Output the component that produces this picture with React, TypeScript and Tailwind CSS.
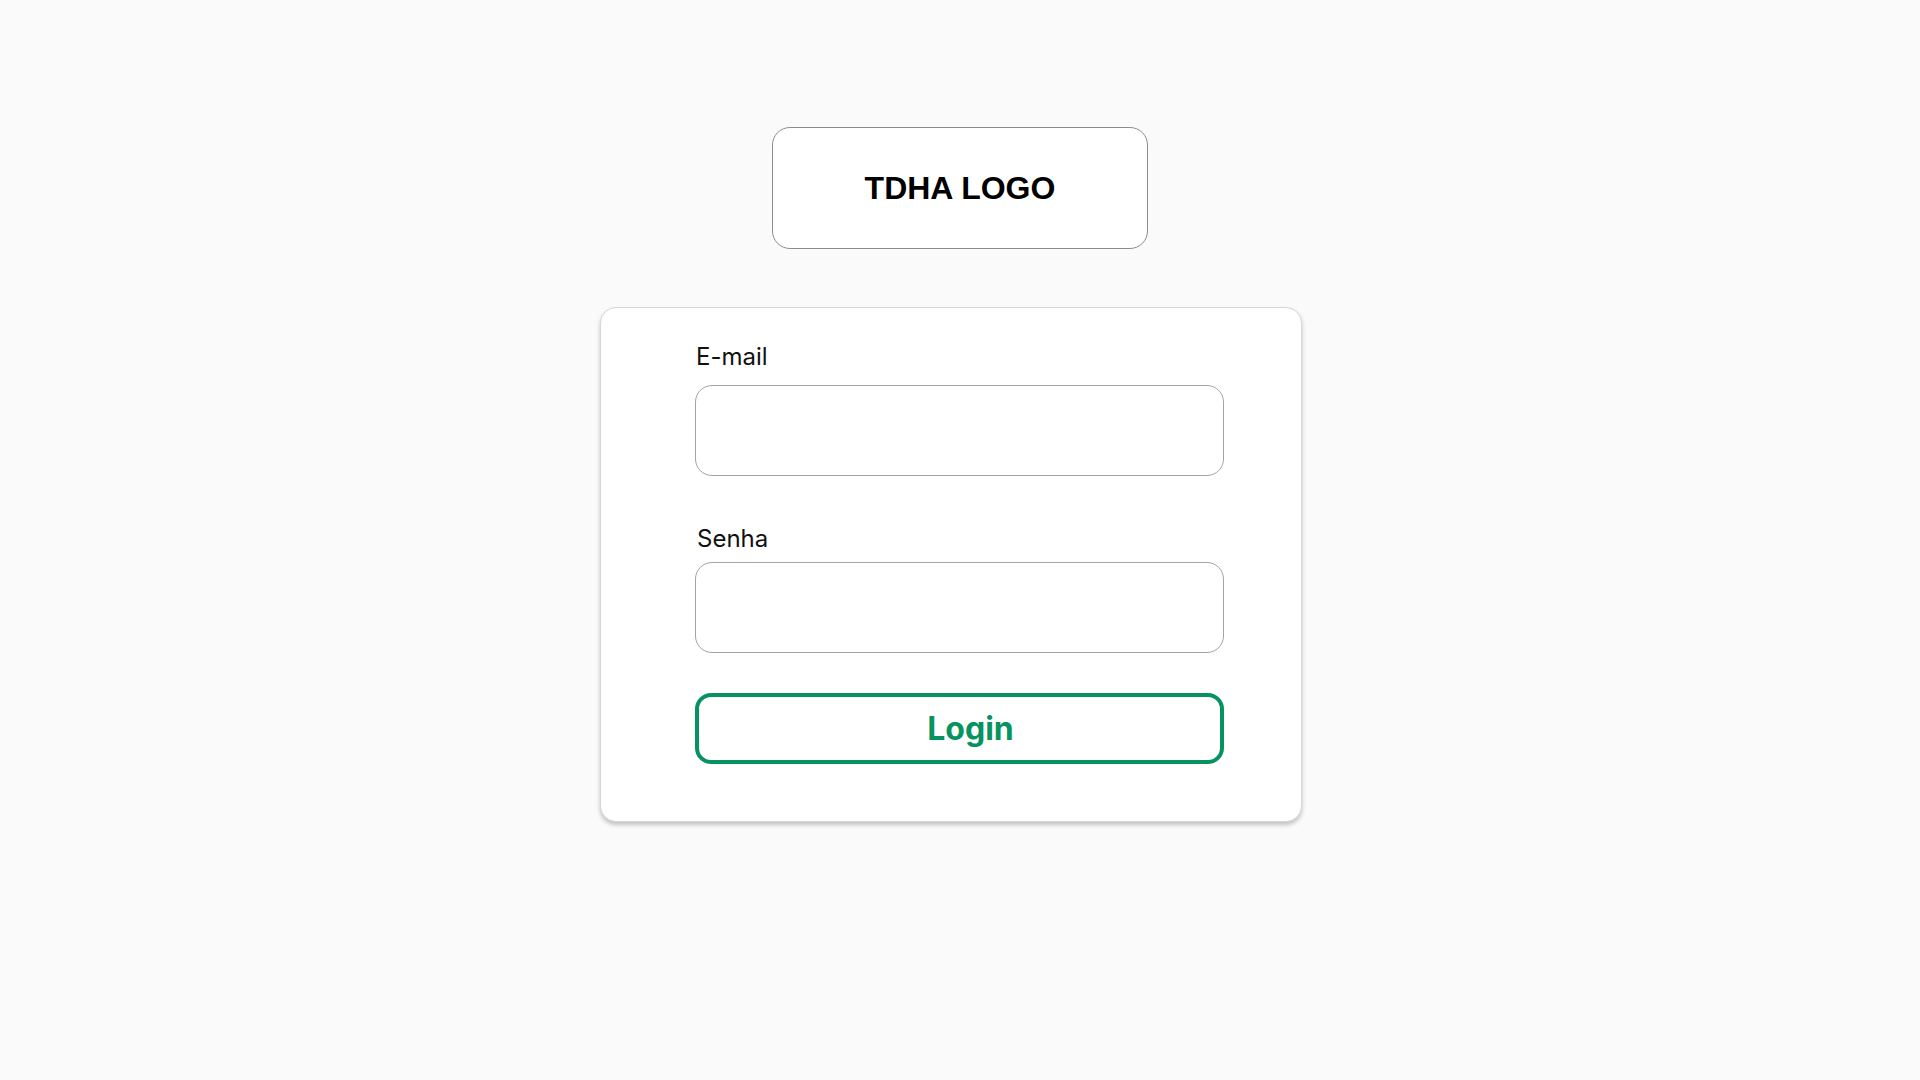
export default function App() {
  return (
    <div className="min-h-screen w-full bg-[#fafafa] flex flex-col items-center" style={{ fontFamily: 'Inter, "Noto Sans", sans-serif' }}>
      <div className="mt-[127px] w-[376px] h-[122px] rounded-[18px] border border-[#8c8c8c] bg-white flex items-center justify-center">
        <span className="text-[32px] font-bold text-black" style={{ fontFamily: '"Liberation Sans", Arial, sans-serif' }}>
          TDHA LOGO
        </span>
      </div>

      <form
        className="mt-[58px] mr-[18px] w-[702px] rounded-[16px] border border-[#d6d6d6] bg-white shadow-[0_3px_4px_rgba(0,0,0,0.22)] pl-[94px] pr-[77px] pt-[34px] pb-[57px] flex flex-col"
        onSubmit={e => e.preventDefault()}
      >
        <label className="text-[24px] leading-[30px] text-[#111] mb-[13px] ml-[1px]">E-mail</label>
        <input className="h-[91px] w-full rounded-[17px] border border-[#a3a3a3] bg-white px-4 outline-none" type="email" />

        <label className="text-[24px] leading-[30px] text-[#111] mt-[48px] mb-[8px] ml-[2px]">Senha</label>
        <input className="h-[91px] w-full rounded-[17px] border border-[#a3a3a3] bg-white px-4 outline-none" type="password" />

        <button
          type="submit"
          className="mt-[40px] h-[71px] w-full rounded-[16px] border-[4px] border-[#06935f] bg-white pl-[22px] text-[32px] font-bold text-[#06935f]"
        >
          Login
        </button>
      </form>
    </div>
  )
}
